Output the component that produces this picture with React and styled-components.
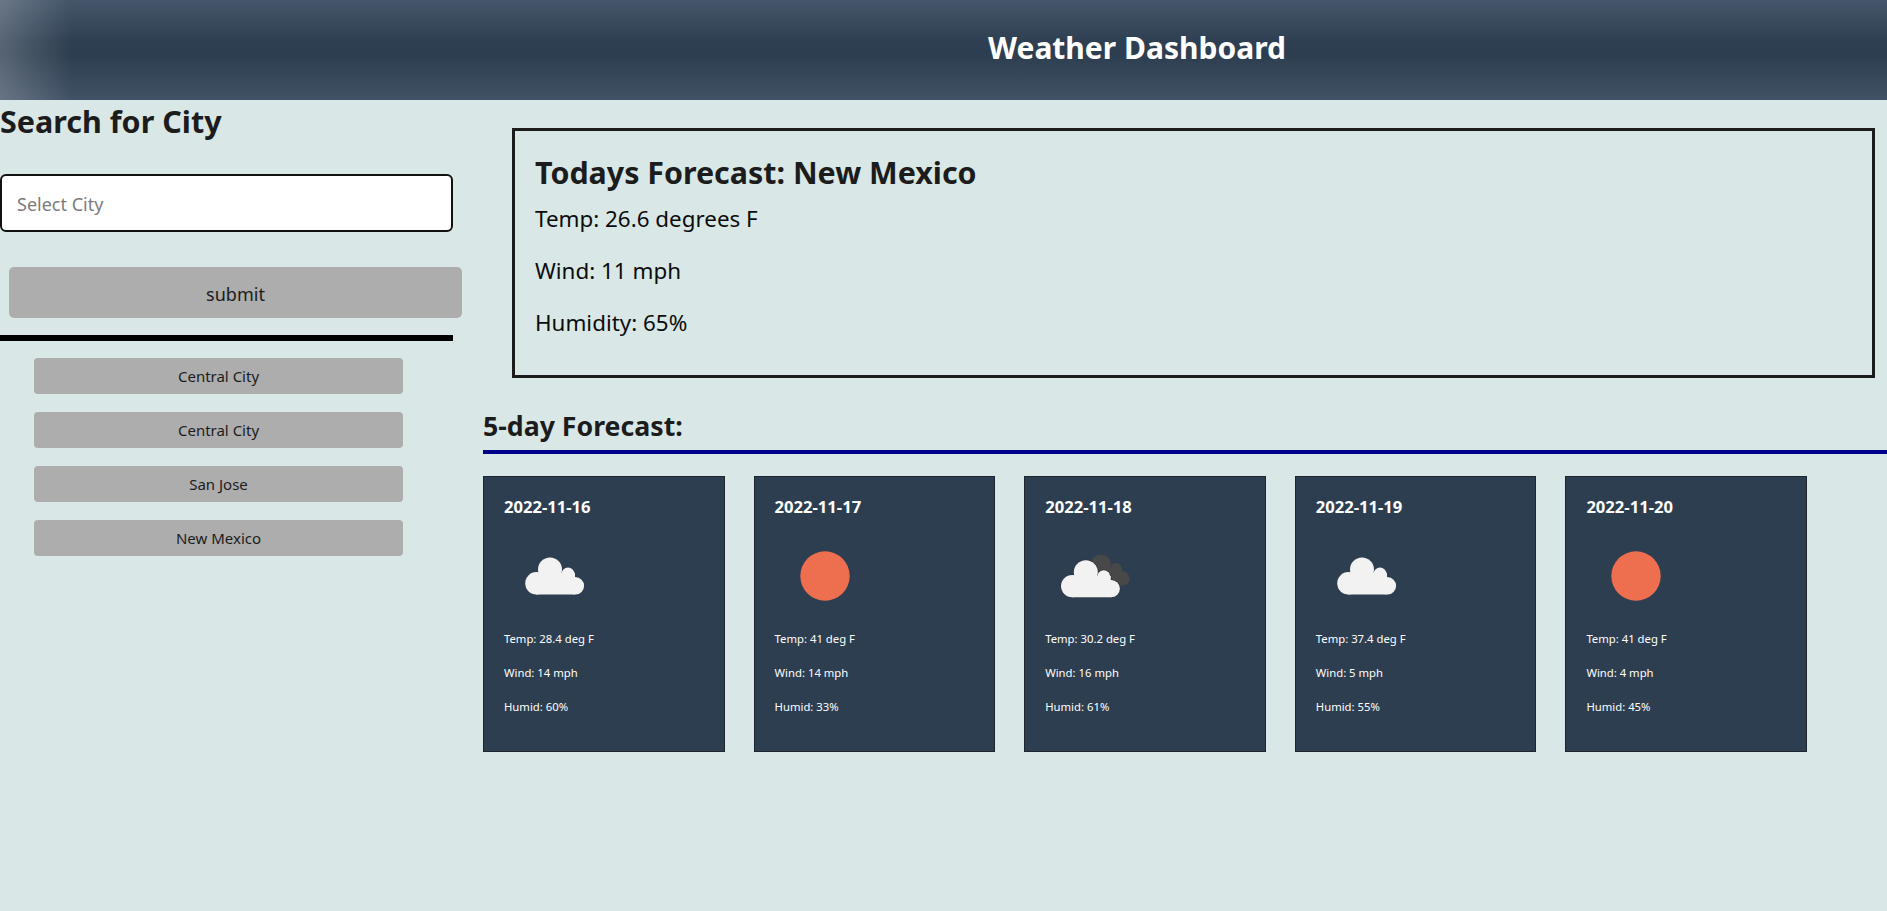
import React from 'react'
import styled, { createGlobalStyle } from 'styled-components'

const GlobalStyle = createGlobalStyle`
  html, body {
    margin: 0;
    padding: 0;
    background: #d9e8e7;
    font-family: "Noto Sans", "Open Sans", Arial, sans-serif;
    color: #1c1c1c;
  }
  * { box-sizing: border-box; }
`

const Page = styled.div`
  height: 911px;
  overflow: hidden;
`

const Header = styled.header`
  height: 100px;
  background: linear-gradient(90deg, rgba(255, 255, 255, 0.2), rgba(255, 255, 255, 0.13) 25px, rgba(255, 255, 255, 0) 72px),
    linear-gradient(180deg, #45566a 0%, #2e3f52 42%, #2d3e50 55%, #425266 100%);
  color: #fff;
  display: flex;
  align-items: center;
  justify-content: center;
  padding: 0 0 4px 387px;
`

const Title = styled.h1`
  margin: 0;
  font-size: 30px;
  line-height: 40px;
  font-weight: 700;
`

const Content = styled.div`
  display: grid;
  grid-template-columns: 483px 1fr;
`

const Sidebar = styled.aside`
  display: flex;
  flex-direction: column;
  align-items: flex-start;
`

const SearchTitle = styled.h2`
  margin: 0;
  font-size: 30.5px;
  line-height: 42px;
  font-weight: 700;
`

const CityInput = styled.input`
  width: 453px;
  height: 58px;
  margin-top: 32px;
  padding: 2px 15px 0;
  background: #fff;
  border: 2px solid #111;
  border-radius: 6px;
  font-family: inherit;
  font-size: 18px;
  outline: none;

  &::placeholder {
    color: #7b7b7b;
  }
`

const SubmitButton = styled.button`
  width: 453px;
  height: 51px;
  margin: 35px 0 0 9px;
  padding: 2px 0 0;
  background: #adadad;
  border: none;
  border-radius: 5px;
  color: #1c1c1c;
  font-family: inherit;
  font-size: 18px;
`

const Divider = styled.div`
  width: 453px;
  height: 6px;
  margin-top: 17px;
  background: #000;
`

const CityList = styled.div`
  display: flex;
  flex-direction: column;
  gap: 18px;
  margin: 17px 0 0 34px;
`

const CityButton = styled.button`
  width: 369px;
  height: 36px;
  padding: 0;
  background: #adadad;
  border: none;
  border-radius: 4px;
  color: #1c1c1c;
  font-family: inherit;
  font-size: 15px;
`

const Main = styled.main`
  display: flex;
  flex-direction: column;
  min-width: 0;
`

const TodayBox = styled.section`
  width: 1363px;
  height: 250px;
  margin: 28px 0 0 29px;
  padding: 20px 20px 0;
  border: 3px solid #1c1c1c;
`

const TodayTitle = styled.h2`
  margin: 0 0 8px;
  font-size: 30.4px;
  line-height: 44px;
  font-weight: 700;
`

const TodayStat = styled.p`
  margin: 0;
  height: 52px;
  font-size: 22.4px;
  line-height: 32px;
  color: #0c0c0c;
`

const ForecastTitle = styled.h3`
  margin: 29px 0 0;
  font-size: 26.7px;
  line-height: 38px;
  font-weight: 700;
`

const BlueRule = styled.div`
  height: 4px;
  margin-top: 5px;
  background: #00008b;
`

const CardRow = styled.div`
  display: flex;
  gap: 29.1px;
  margin-top: 22px;
`

const Card = styled.article`
  width: 241.5px;
  height: 276px;
  padding: 19px 20px 0;
  background: #2d3e50;
  border: 1px solid #1c2530;
  color: #fff;
`

const CardDate = styled.h4`
  margin: 0;
  font-size: 16.6px;
  line-height: 22px;
  font-weight: 700;
`

const IconBox = styled.svg`
  display: block;
  width: 100px;
  height: 100px;
  margin: 8px 0 5px;
`

const CardStat = styled.p`
  margin: 0;
  height: 34px;
  font-size: 11.3px;
  line-height: 16px;
`

const CloudShape = ({ fill, stroke, transform }) => (
  <g fill={fill} stroke={stroke} strokeWidth={stroke ? 1.4 : 0} transform={transform}>
    <circle cx="32.4" cy="57.3" r="11.2" />
    <circle cx="46" cy="43.5" r="12" />
    <circle cx="64" cy="48" r="6.5" />
    <circle cx="71.4" cy="59.8" r="8.7" />
    <rect x="32" y="47" width="39" height="21.5" />
  </g>
)

const WeatherIcon = ({ type }) => (
  <IconBox viewBox="0 0 100 100">
    {type === 'sun' && <circle cx="50" cy="50" r="24.7" fill="#ee6f4f" />}
    {type === 'cloud' && <CloudShape fill="#f2f2f2" />}
    {type === 'clouds' && (
      <>
        <CloudShape fill="#484848" transform="translate(17.3 2) scale(0.84)" />
        <CloudShape fill="#2b3540" stroke="#2b3540" transform="translate(-5.2 2.8)" />
        <CloudShape fill="#f2f2f2" transform="translate(-5.2 2.8)" />
      </>
    )}
  </IconBox>
)

const cities = ['Central City', 'Central City', 'San Jose', 'New Mexico']

const forecast = [
  { date: '2022-11-16', icon: 'cloud', temp: '28.4', wind: '14', humid: '60' },
  { date: '2022-11-17', icon: 'sun', temp: '41', wind: '14', humid: '33' },
  { date: '2022-11-18', icon: 'clouds', temp: '30.2', wind: '16', humid: '61' },
  { date: '2022-11-19', icon: 'cloud', temp: '37.4', wind: '5', humid: '55' },
  { date: '2022-11-20', icon: 'sun', temp: '41', wind: '4', humid: '45' },
]

export default function App() {
  return (
    <Page>
      <GlobalStyle />
      <Header>
        <Title>Weather Dashboard</Title>
      </Header>
      <Content>
        <Sidebar>
          <SearchTitle>Search for City</SearchTitle>
          <CityInput placeholder="Select City" />
          <SubmitButton>submit</SubmitButton>
          <Divider />
          <CityList>
            {cities.map((city, i) => (
              <CityButton key={i}>{city}</CityButton>
            ))}
          </CityList>
        </Sidebar>
        <Main>
          <TodayBox>
            <TodayTitle>Todays Forecast: New Mexico</TodayTitle>
            <TodayStat>Temp: 26.6 degrees F</TodayStat>
            <TodayStat>Wind: 11 mph</TodayStat>
            <TodayStat>Humidity: 65%</TodayStat>
          </TodayBox>
          <ForecastTitle>5-day Forecast:</ForecastTitle>
          <BlueRule />
          <CardRow>
            {forecast.map((day) => (
              <Card key={day.date}>
                <CardDate>{day.date}</CardDate>
                <WeatherIcon type={day.icon} />
                <CardStat>Temp: {day.temp} deg F</CardStat>
                <CardStat>Wind: {day.wind} mph</CardStat>
                <CardStat>Humid: {day.humid}%</CardStat>
              </Card>
            ))}
          </CardRow>
        </Main>
      </Content>
    </Page>
  )
}
